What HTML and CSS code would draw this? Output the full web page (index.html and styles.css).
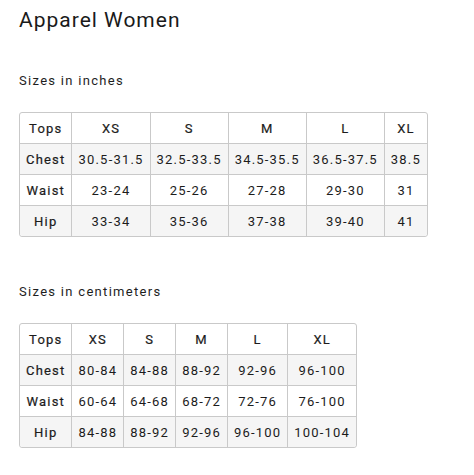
FILE: index.html
```html
<!DOCTYPE html>
<html lang="en">
<head>
<meta charset="utf-8">
<title>Apparel Women</title>
<link rel="stylesheet" href="styles.css">
</head>
<body>
<main class="page">
  <h1 class="title">Apparel Women</h1>

  <section class="chart chart-inches">
    <h2 class="chart-title">Sizes in inches</h2>
    <table class="size-table">
      <thead>
        <tr><th class="label">Tops</th><th>XS</th><th>S</th><th>M</th><th>L</th><th>XL</th></tr>
      </thead>
      <tbody>
        <tr class="stripe"><th class="label">Chest</th><td>30.5-31.5</td><td>32.5-33.5</td><td>34.5-35.5</td><td>36.5-37.5</td><td>38.5</td></tr>
        <tr><th class="label">Waist</th><td>23-24</td><td>25-26</td><td>27-28</td><td>29-30</td><td>31</td></tr>
        <tr class="stripe"><th class="label">Hip</th><td>33-34</td><td>35-36</td><td>37-38</td><td>39-40</td><td>41</td></tr>
      </tbody>
    </table>
  </section>

  <section class="chart chart-cm">
    <h2 class="chart-title">Sizes in centimeters</h2>
    <table class="size-table">
      <thead>
        <tr><th class="label">Tops</th><th>XS</th><th>S</th><th>M</th><th>L</th><th>XL</th></tr>
      </thead>
      <tbody>
        <tr class="stripe"><th class="label">Chest</th><td>80-84</td><td>84-88</td><td>88-92</td><td>92-96</td><td>96-100</td></tr>
        <tr><th class="label">Waist</th><td>60-64</td><td>64-68</td><td>68-72</td><td>72-76</td><td>76-100</td></tr>
        <tr class="stripe"><th class="label">Hip</th><td>84-88</td><td>88-92</td><td>92-96</td><td>96-100</td><td>100-104</td></tr>
      </tbody>
    </table>
  </section>
</main>
</body>
</html>
```

FILE: styles.css
```css
html, body {
  margin: 0;
  padding: 0;
  background: #ffffff;
}

body {
  font-family: Roboto, "Liberation Sans", Arial, sans-serif;
  color: #1c1c1c;
}

.page {
  padding: 5px 19px 0;
}

.title {
  margin: 0;
  font-size: 21px;
  line-height: 30px;
  font-weight: 400;
  letter-spacing: 1px;
  color: #1a1a1a;
}

.chart-title {
  margin: 0;
  font-size: 13px;
  line-height: 16px;
  font-weight: 400;
  letter-spacing: 1.3px;
  color: #1e1e1e;
}

.chart-inches {
  margin-top: 38px;
}

.chart-inches .chart-title {
  margin-bottom: 23px;
}

.chart-cm {
  margin-top: 47px;
}

.chart-cm .chart-title {
  margin-bottom: 23px;
}

.size-table {
  border-collapse: separate;
  border-spacing: 0;
  border: 1px solid #c9c9c9;
  border-radius: 3px;
  font-size: 13px;
  letter-spacing: 1.2px;
}

.size-table th,
.size-table td {
  height: 31px;
  padding: 0 6px;
  box-sizing: border-box;
  text-align: center;
  vertical-align: middle;
  white-space: nowrap;
  border-right: 1px solid #c9c9c9;
  border-bottom: 1px solid #c9c9c9;
  color: #1c1c1c;
}

.size-table th {
  font-weight: 400;
  -webkit-text-stroke: 0.2px currentColor;
}

.size-table td {
  font-weight: 400;
}

.size-table tr > :last-child {
  border-right: none;
}

.size-table tbody tr:last-child > * {
  border-bottom: none;
  height: 30px;
}

.size-table .stripe > * {
  background: #f5f5f5;
}

.size-table thead tr:first-child > :first-child { border-top-left-radius: 3px; }
.size-table thead tr:first-child > :last-child { border-top-right-radius: 3px; }
.size-table tbody tr:last-child > :first-child { border-bottom-left-radius: 3px; }
.size-table tbody tr:last-child > :last-child { border-bottom-right-radius: 3px; }
```
